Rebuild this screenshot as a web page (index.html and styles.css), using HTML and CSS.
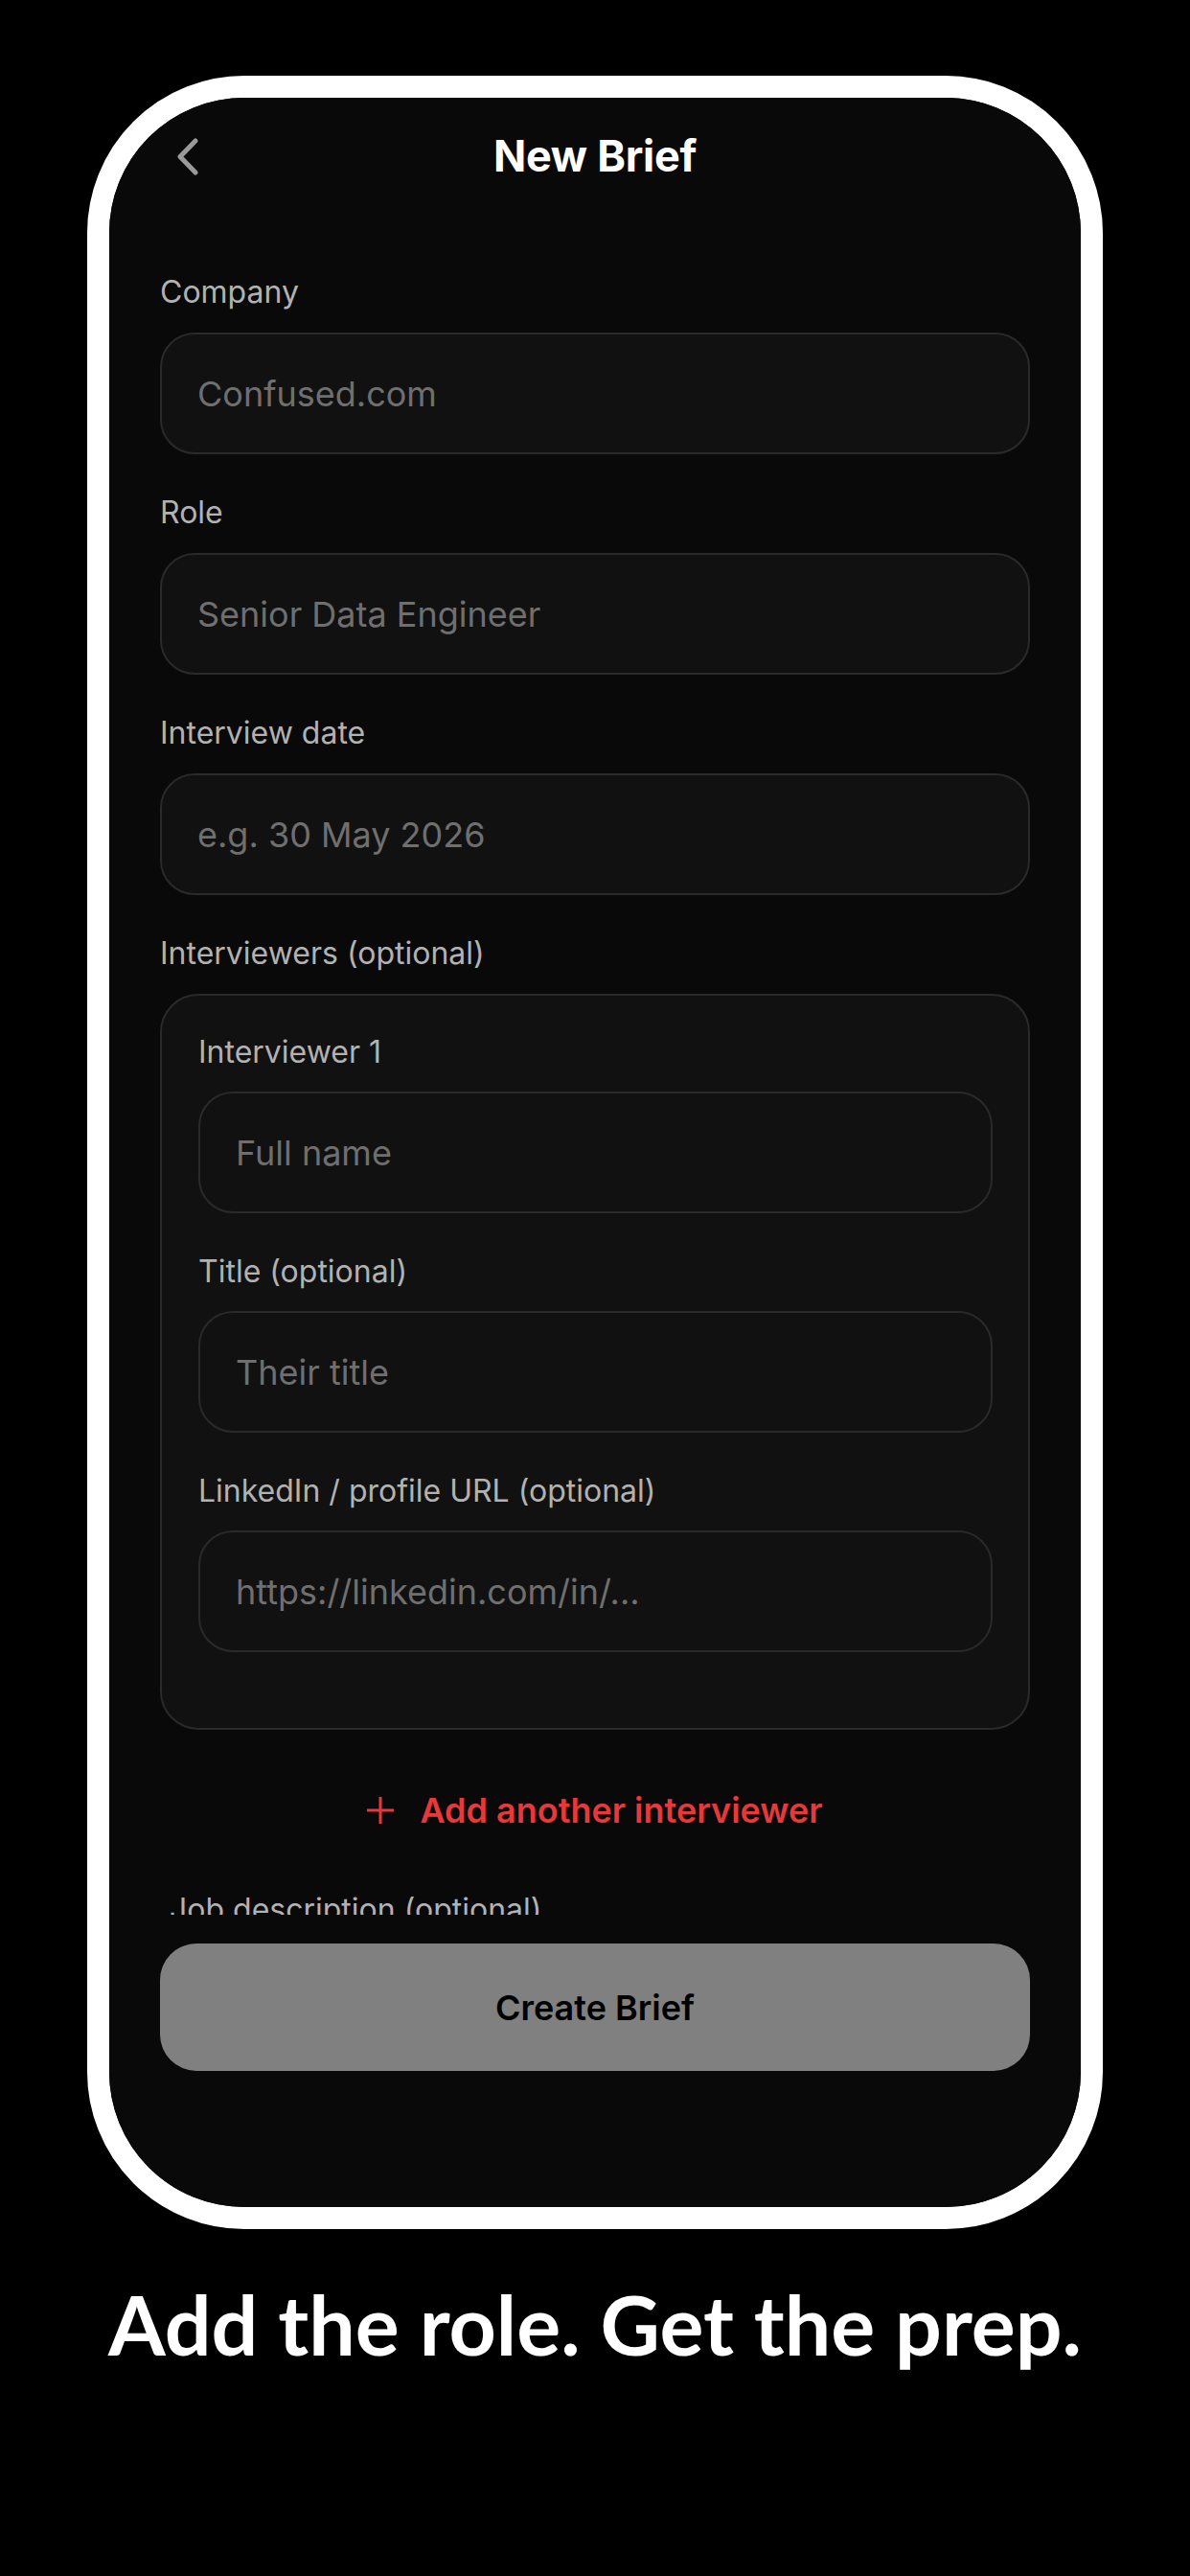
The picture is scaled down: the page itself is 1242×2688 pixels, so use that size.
FILE: index.html
```html
<!DOCTYPE html>
<html lang="en">
<head>
	<meta charset="UTF-8">
	<meta name="viewport" content="width=device-width, initial-scale=1.0">
	<title>New Brief</title>
	<link rel="stylesheet" href="styles.css">
</head>
<body>
	<div class="phone">
		<div class="screen">
			<div class="header">
				<div class="back">
					<svg width="22" height="39" viewBox="0 0 22 39"><path d="M19 3 L3 19.5 L19 36" fill="none" stroke="#9a9a9a" stroke-width="5" stroke-linecap="round" stroke-linejoin="round"/></svg>
				</div>
				<div class="title">New Brief</div>
				<div></div>
			</div>

			<div class="scroll">
				<div class="field">
					<div class="label">Company</div>
					<div class="input">Confused.com</div>
				</div>
				<div class="field">
					<div class="label">Role</div>
					<div class="input">Senior Data Engineer</div>
				</div>
				<div class="field">
					<div class="label">Interview date</div>
					<div class="input">e.g. 30 May 2026</div>
				</div>
				<div class="field">
					<div class="label">Interviewers (optional)</div>
					<div class="card">
						<div class="field">
							<div class="label">Interviewer 1</div>
							<div class="input">Full name</div>
						</div>
						<div class="field">
							<div class="label">Title (optional)</div>
							<div class="input">Their title</div>
						</div>
						<div class="field">
							<div class="label">LinkedIn / profile URL (optional)</div>
							<div class="input">https://linkedin.com/in/...</div>
						</div>
					</div>
				</div>
				<div class="add">
					<svg width="28" height="30" viewBox="0 0 28 30"><path d="M14 1 V29 M0 15 H28" stroke="#e5393b" stroke-width="3"/></svg>
					<span>Add another interviewer</span>
				</div>
				<!-- cut off by the scroll area, as on the device -->
				<div class="label jd">Job description (optional)</div>
			</div>

			<div class="footer">
				<div class="btn">Create Brief</div>
			</div>
		</div>
	</div>
	<div class="tagline">Add the role. Get the prep.</div>
</body>
</html>
```

FILE: styles.css
```css
*{
	margin: 0;
	padding: 0;
	box-sizing: border-box;
}
body{
	background: #000;
	width: 1242px;
	font-family: Inter, "Noto Sans", sans-serif;
}
.phone{
	width: 1060px;
	margin: 79px 0 0 91px;
	border: 23px solid #fff;
	border-radius: 164px;
	overflow: hidden;
}
.screen{
	height: 2201px;
	background: #090909;
	display: flex;
	flex-direction: column;
	padding: 0 53px;
}
.header{
	display: grid;
	grid-template-columns: 1fr auto 1fr;
	align-items: center;
	padding-top: 33px;
	height: 89px;
}
.back{
	padding-left: 18px;
	display: flex;
	align-items: center;
}
.title{
	color: #fff;
	font-size: 45px;
	font-weight: 700;
	line-height: 56px;
	letter-spacing: -0.3px;
}
.scroll{
	height: 1807px;
	overflow: hidden;
	padding-top: 94px;
	display: flex;
	flex-direction: column;
	gap: 41px;
}
.field{
	display: flex;
	flex-direction: column;
	gap: 22px;
}
.label{
	color: #b2b2b2;
	font-size: 32px;
	line-height: 40px;
}
.input{
	height: 127px;
	background: #111;
	border: 2px solid #2a2a2a;
	border-radius: 36px;
	padding-left: 37px;
	display: flex;
	align-items: center;
	color: #6f6f6f;
	font-size: 36px;
}
.card{
	background: #111;
	border: 2px solid #2a2a2a;
	border-radius: 40px;
	padding: 39px 37px 79px 38px;
	display: flex;
	flex-direction: column;
	gap: 41px;
}
.card .field{
	gap: 21px;
}
.add{
	display: flex;
	justify-content: center;
	align-items: center;
	gap: 27px;
	margin-top: 21px;
	color: #e5393b;
	font-size: 36px;
	font-weight: 600;
	line-height: 44px;
}
.jd{
	margin-top: 21px;
	padding-left: 10px;
}
.footer{
	padding-top: 30px;
}
.btn{
	height: 133px;
	background: #808080;
	border-radius: 38px;
	display: flex;
	justify-content: center;
	align-items: center;
	color: #000;
	font-size: 36px;
	font-weight: 600;
}
.tagline{
	margin-top: 49px;
	text-align: center;
	color: #fff;
	font-family: Lato, sans-serif;
	font-weight: 700;
	font-size: 86px;
	line-height: 100px;
}
```
